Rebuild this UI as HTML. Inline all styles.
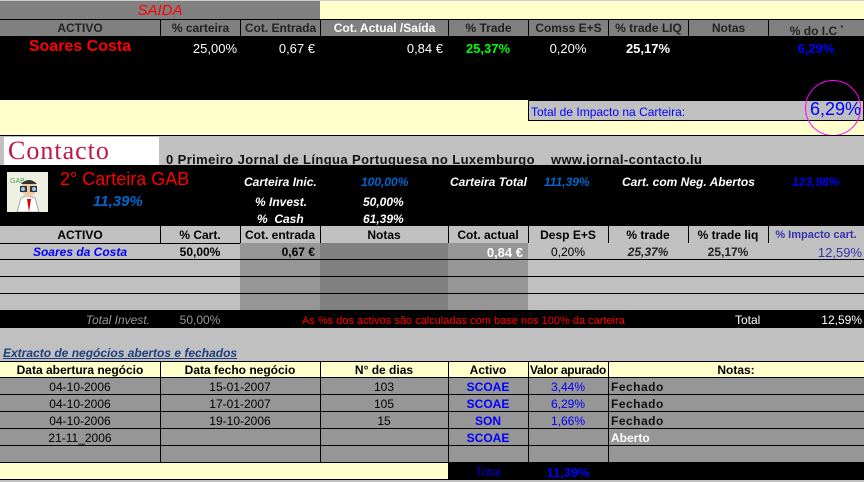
<!DOCTYPE html>
<html><head><meta charset="utf-8"><style>
*{margin:0;padding:0;box-sizing:border-box}
body{width:864px;height:482px;background:#c0c0c0;position:relative;overflow:hidden;font-family:"Liberation Sans",Arial,sans-serif;font-size:12px;color:#000}
div{position:absolute}
.c{text-align:center}.r{text-align:right}
.b{font-weight:bold}.i{font-style:italic}
.t{white-space:nowrap;line-height:17px;padding-top:1px}
</style></head><body>
<div style="left:0;top:0;width:320px;height:19px;background:#808080;border-top:1px solid #ccc"></div>
<div class="t c i" style="left:0;top:1px;width:320px;color:#f00;font-size:15px">SAIDA</div>
<div style="left:320px;top:0;width:544px;height:19px;background:#ffffcc;border-top:1px solid #ccc"></div>
<div style="left:0;top:19px;width:864px;height:17px;background:#808080;border-top:1px solid #000"></div>
<div class="t c b" style="left:0;top:19px;width:160px;color:#222">ACTIVO</div>
<div class="t c b" style="left:160px;top:19px;width:80px;color:#222;border-left:1px solid #000">% carteira</div>
<div class="t c b" style="left:240px;top:19px;width:80px;color:#222;border-left:1px solid #000">Cot. Entrada</div>
<div class="t c b" style="left:320px;top:19px;width:128px;color:#fff;border-left:1px solid #000">Cot. Actual /Saída</div>
<div class="t c b" style="left:448px;top:19px;width:80px;color:#222;border-left:1px solid #000">% Trade</div>
<div class="t c b" style="left:528px;top:19px;width:80px;color:#222;border-left:1px solid #000">Comss E+S</div>
<div class="t c b" style="left:608px;top:19px;width:80px;color:#222;border-left:1px solid #000">% trade LIQ</div>
<div class="t c b" style="left:688px;top:19px;width:80px;color:#222;border-left:1px solid #000">Notas</div>
<div class="t c b" style="left:768px;top:19px;width:96px;color:#222;border-left:1px solid #000">% do I.C <sup style="font-size:7px">*</sup></div>
<div style="left:0;top:36px;width:864px;height:64px;background:#000"></div>
<div class="t c b" style="left:0;top:37px;width:160px;color:#f00;font-size:16px">Soares Costa</div>
<div class="t r" style="left:160px;top:39px;width:77px;color:#fff;font-size:13px">25,00%</div>
<div class="t r" style="left:240px;top:39px;width:75px;color:#fff;font-size:13px">0,67 €</div>
<div class="t r" style="left:320px;top:39px;width:123px;color:#fff;font-size:13px">0,84 €</div>
<div class="t c b" style="left:448px;top:39px;width:80px;color:#0f0;font-size:13px">25,37%</div>
<div class="t c" style="left:528px;top:39px;width:80px;color:#fff;font-size:13px">0,20%</div>
<div class="t c b" style="left:608px;top:39px;width:80px;color:#fff;font-size:13px">25,17%</div>
<div class="t c b" style="left:768px;top:39px;width:96px;color:#00f;font-size:13px">6,29%</div>
<div style="left:0;top:100px;width:864px;height:35px;background:#ffffcc"></div>
<div style="left:528px;top:100px;width:336px;height:21px;background:#c0c0c0;border:1px solid #000"></div>
<div class="t" style="left:531px;top:103px;color:#00f;font-size:12px">Total de Impacto na Carteira:</div>
<div class="t r" style="left:760px;top:98px;width:101px;color:#00f;font-size:18px;line-height:20px">6,29%</div>
<div style="left:805px;top:80px;width:56px;height:56px;border:1px solid #f0f;border-radius:50%"></div>
<div style="left:0;top:135px;width:864px;height:32px;background:#c0c0c0;border-top:1px solid #000;border-bottom:2px solid #000"></div>
<div style="left:4px;top:137px;width:155px;height:28px;background:#fff"></div>
<div class="t" style="left:8px;top:138px;color:#c0174a;font-family:'Liberation Serif',serif;font-size:26px;line-height:26px;letter-spacing:1px;padding:0">Contacto</div>
<div class="t b" style="left:166px;top:151px;font-size:13px;line-height:16px;letter-spacing:.4px;color:#111">0 Primeiro Jornal de Língua Portuguesa no Luxemburgo &nbsp;&nbsp;&nbsp;www.jornal-contacto.lu</div>
<div style="left:0;top:167px;width:864px;height:59px;background:#000"></div>
<div style="left:7px;top:172px;width:41px;height:40px;overflow:hidden">
<svg width="41" height="40"><rect width="41" height="40" fill="#eef0e4"/><text x="3" y="11" font-size="7" fill="#4a4" font-family="Liberation Sans">GAB</text><path d="M10 40 L14 26 Q20 22 28 26 L32 40Z" fill="#fff" stroke="#aaa"/><path d="M20 27 L22 40 L24 27Z" fill="#d00"/><circle cx="22" cy="16" r="8" fill="#f0c8a0"/><path d="M14 12 Q22 4 30 12" fill="#333"/><rect x="13" y="14" width="7" height="6" fill="#333"/><rect x="23" y="14" width="7" height="6" fill="#333"/><circle cx="16" cy="17" r="2" fill="#9cf"/><circle cx="27" cy="17" r="2" fill="#9cf"/></svg></div>
<div class="t" style="left:60px;top:168px;color:#f00;font-size:18px;line-height:20px">2° Carteira GAB</div>
<div class="t i b" style="left:93px;top:191px;color:#0066cc;font-size:15px;line-height:20px">11,39%</div>
<div class="t i b" style="left:244px;top:173px;color:#fff">Carteira Inic.</div>
<div class="t i b" style="left:361px;top:173px;color:#0066cc">100,00%</div>
<div class="t i b" style="left:255px;top:193px;color:#fff">% Invest.</div>
<div class="t i b" style="left:363px;top:193px;color:#fff">50,00%</div>
<div class="t i b" style="left:257px;top:210px;color:#fff">%&nbsp; Cash</div>
<div class="t i b" style="left:363px;top:210px;color:#fff">61,39%</div>
<div class="t i b" style="left:450px;top:173px;color:#fff">Carteira Total</div>
<div class="t i b" style="left:544px;top:173px;color:#0066cc">111,39%</div>
<div class="t i b" style="left:622px;top:173px;color:#fff">Cart. com Neg. Abertos</div>
<div class="t i b" style="left:792px;top:173px;color:#0000ee">123,98%</div>
<div style="left:240px;top:243px;width:80px;height:67px;background:#969696"></div>
<div style="left:320px;top:243px;width:128px;height:67px;background:#808080"></div>
<div style="left:448px;top:243px;width:80px;height:67px;background:#969696"></div>
<div style="left:0;top:243px;width:240px;height:1px;background:#000"></div>
<div style="left:0;top:259px;width:864px;height:1px;background:#000"></div>
<div style="left:0;top:276px;width:864px;height:1px;background:#000"></div>
<div style="left:0;top:293px;width:864px;height:1px;background:#000"></div>
<div style="left:160px;top:226px;width:1px;height:17px;background:#000"></div>
<div style="left:240px;top:226px;width:1px;height:17px;background:#000"></div>
<div style="left:320px;top:226px;width:1px;height:17px;background:#000"></div>
<div style="left:448px;top:226px;width:1px;height:17px;background:#000"></div>
<div style="left:528px;top:226px;width:1px;height:17px;background:#000"></div>
<div style="left:608px;top:226px;width:1px;height:17px;background:#000"></div>
<div style="left:688px;top:226px;width:1px;height:17px;background:#000"></div>
<div style="left:768px;top:226px;width:1px;height:17px;background:#000"></div>
<div class="t c b" style="left:0;top:226px;width:160px">ACTIVO</div>
<div class="t c b" style="left:160px;top:226px;width:80px">% Cart.</div>
<div class="t c b" style="left:240px;top:226px;width:80px">Cot. entrada</div>
<div class="t c b" style="left:320px;top:226px;width:128px">Notas</div>
<div class="t c b" style="left:448px;top:226px;width:80px">Cot. actual</div>
<div class="t c b" style="left:528px;top:226px;width:80px">Desp E+S</div>
<div class="t c b" style="left:608px;top:226px;width:80px">% trade</div>
<div class="t c b" style="left:688px;top:226px;width:80px">% trade liq</div>
<div class="t c b" style="left:768px;top:226px;width:96px;color:#3333aa;font-size:11px">% Impacto cart.</div>
<div class="t c b i" style="left:0;top:243px;width:160px;color:#00f">Soares da Costa</div>
<div class="t c b" style="left:160px;top:243px;width:80px">50,00%</div>
<div class="t r b" style="left:240px;top:243px;width:75px">0,67 €</div>
<div class="t r b" style="left:448px;top:243px;width:75px;color:#fff;font-size:13px">0,84 €</div>
<div class="t c" style="left:528px;top:243px;width:80px">0,20%</div>
<div class="t c b i" style="left:608px;top:243px;width:80px;color:#222">25,37%</div>
<div class="t c b" style="left:688px;top:243px;width:80px;color:#222">25,17%</div>
<div class="t r" style="left:768px;top:243px;width:94px;color:#3333aa;font-size:13px">12,59%</div>
<div style="left:0;top:310px;width:864px;height:18px;background:#000"></div>
<div class="t r i" style="left:0;top:311px;width:150px;color:#999">Total Invest.</div>
<div class="t c" style="left:160px;top:311px;width:80px;color:#999">50,00%</div>
<div class="t" style="left:302px;top:312px;color:#f00;font-size:11px">As %s dos activos são calculadas com base nos 100% da carteira</div>
<div class="t" style="left:735px;top:311px;color:#fff">Total</div>
<div class="t r" style="left:768px;top:311px;width:94px;color:#fff">12,59%</div>
<div class="t b i" style="left:3px;top:344px;color:#1f3f7f;text-decoration:underline">Extracto de negócios abertos e fechados</div>
<div style="left:0;top:361px;width:864px;height:17px;background:#ffffcc;border-top:1px solid #000;border-bottom:1px solid #000"></div>
<div style="left:0;top:378px;width:864px;height:85px;background:#969696"></div>
<div style="left:0;top:394px;width:864px;height:1px;background:#000"></div>
<div style="left:0;top:411px;width:864px;height:1px;background:#000"></div>
<div style="left:0;top:428px;width:864px;height:1px;background:#000"></div>
<div style="left:0;top:445px;width:864px;height:1px;background:#000"></div>
<div style="left:0;top:462px;width:864px;height:1px;background:#000"></div>
<div style="left:160px;top:361px;width:1px;height:102px;background:#000"></div>
<div style="left:320px;top:361px;width:1px;height:102px;background:#000"></div>
<div style="left:448px;top:361px;width:1px;height:119px;background:#000"></div>
<div style="left:528px;top:361px;width:1px;height:102px;background:#000"></div>
<div style="left:608px;top:361px;width:1px;height:102px;background:#000"></div>
<div class="t c b" style="left:0;top:361px;width:160px">Data abertura negócio</div>
<div class="t c b" style="left:160px;top:361px;width:160px">Data fecho negócio</div>
<div class="t c b" style="left:320px;top:361px;width:128px">N° de dias</div>
<div class="t c b" style="left:448px;top:361px;width:80px">Activo</div>
<div class="t c b" style="left:528px;top:361px;width:80px;letter-spacing:-.3px">Valor apurado</div>
<div class="t c b" style="left:608px;top:361px;width:256px">Notas:</div>
<div class="t c" style="left:0;top:378px;width:160px">04-10-2006</div>
<div class="t c" style="left:160px;top:378px;width:160px">15-01-2007</div>
<div class="t c" style="left:320px;top:378px;width:128px">103</div>
<div class="t c b" style="left:448px;top:378px;width:80px;color:#00f">SCOAE</div>
<div class="t c" style="left:528px;top:378px;width:80px;color:#00f">3,44%</div>
<div class="t b" style="left:611px;top:378px;color:#111;letter-spacing:.5px">Fechado</div>
<div class="t c" style="left:0;top:395px;width:160px">04-10-2006</div>
<div class="t c" style="left:160px;top:395px;width:160px">17-01-2007</div>
<div class="t c" style="left:320px;top:395px;width:128px">105</div>
<div class="t c b" style="left:448px;top:395px;width:80px;color:#00f">SCOAE</div>
<div class="t c" style="left:528px;top:395px;width:80px;color:#00f">6,29%</div>
<div class="t b" style="left:611px;top:395px;color:#111;letter-spacing:.5px">Fechado</div>
<div class="t c" style="left:0;top:412px;width:160px">04-10-2006</div>
<div class="t c" style="left:160px;top:412px;width:160px">19-10-2006</div>
<div class="t c" style="left:320px;top:412px;width:128px">15</div>
<div class="t c b" style="left:448px;top:412px;width:80px;color:#00f">SON</div>
<div class="t c" style="left:528px;top:412px;width:80px;color:#00f">1,66%</div>
<div class="t b" style="left:611px;top:412px;color:#111;letter-spacing:.5px">Fechado</div>
<div class="t c" style="left:0;top:429px;width:160px">21-11_2006</div>
<div class="t c b" style="left:448px;top:429px;width:80px;color:#00f">SCOAE</div>
<div class="t b" style="left:611px;top:429px;color:#fff">Aberto</div>
<div style="left:0;top:463px;width:448px;height:17px;background:#ffffcc;border-bottom:1px solid #000"></div>
<div style="left:448px;top:463px;width:416px;height:17px;background:#000"></div>
<div class="t c" style="left:448px;top:463px;width:80px;color:#00c">Total</div>
<div class="t c b" style="left:528px;top:463px;width:80px;color:#00f;font-size:13px">11,39%</div>
</body></html>
